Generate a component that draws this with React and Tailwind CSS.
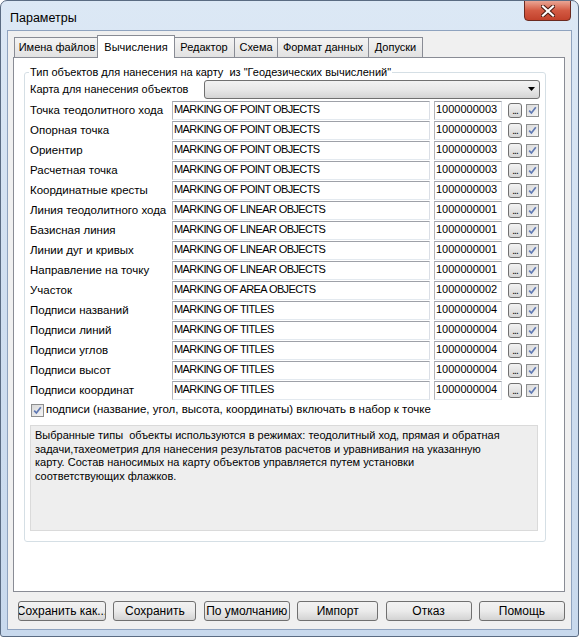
import React from 'react';

const rows = [
  ['Точка теодолитного хода', 'MARKING OF POINT OBJECTS', '1000000003'],
  ['Опорная точка', 'MARKING OF POINT OBJECTS', '1000000003'],
  ['Ориентир', 'MARKING OF POINT OBJECTS', '1000000003'],
  ['Расчетная точка', 'MARKING OF POINT OBJECTS', '1000000003'],
  ['Координатные кресты', 'MARKING OF POINT OBJECTS', '1000000003'],
  ['Линия теодолитного хода', 'MARKING OF LINEAR OBJECTS', '1000000001'],
  ['Базисная линия', 'MARKING OF LINEAR OBJECTS', '1000000001'],
  ['Линии дуг и кривых', 'MARKING OF LINEAR OBJECTS', '1000000001'],
  ['Направление на точку', 'MARKING OF LINEAR OBJECTS', '1000000001'],
  ['Участок', 'MARKING OF AREA OBJECTS', '1000000002'],
  ['Подписи названий', 'MARKING OF TITLES', '1000000004'],
  ['Подписи линий', 'MARKING OF TITLES', '1000000004'],
  ['Подписи углов', 'MARKING OF TITLES', '1000000004'],
  ['Подписи высот', 'MARKING OF TITLES', '1000000004'],
  ['Подписи координат', 'MARKING OF TITLES', '1000000004'],
];

const buttons = [
  ['Сохранить как...', 'w-[88px]'],
  ['Сохранить', 'w-[83px]'],
  ['По умолчанию', 'w-[86px]'],
  ['Импорт', 'w-[81px]'],
  ['Отказ', 'w-[86px]'],
  ['Помощь', 'w-[86px]'],
];

function CheckBox() {
  return (
    <span className="w-[13px] h-[13px] shrink-0 border border-[#8e8f8f] bg-gradient-to-br from-[#d9d9d9] to-[#f5f5f5] flex items-center justify-center">
      <svg width="9" height="9" viewBox="0 0 9 9">
        <path d="M1.2 4.6 L3.4 7 L7.8 1.2" stroke="#5f78b3" strokeWidth="1.7" fill="none" />
      </svg>
    </span>
  );
}

function Field({ value, className }) {
  return (
    <div
      className={`h-[19px] bg-white border border-t-[#9ea1a8] border-l-[#b3b5ba] border-r-[#dbdfe6] border-b-[#e3e9ef] pl-[1px] leading-[15px] text-[11px] whitespace-nowrap overflow-hidden ${className}`}
    >
      {value}
    </div>
  );
}

function Tab({ children, className }) {
  return (
    <div
      className={`h-[20px] border border-b-0 border-[#898c95] bg-gradient-to-b from-[#f4f4f4] to-[#e2e2e2] flex items-center justify-center whitespace-nowrap text-[11px] ${className}`}
    >
      {children}
    </div>
  );
}

export default function App() {
  return (
    <div
      className="w-[579px] h-[637px] rounded-t-[7px] rounded-b-[3px] border border-[#5a6b82] bg-gradient-to-b from-[#dce8f5] via-[#cfdef0] to-[#c8d9ed] flex flex-col text-[11.5px] text-black overflow-hidden"
      style={{ fontFamily: '"Liberation Sans", Arial, sans-serif' }}
    >
      {/* title bar */}
      <div className="h-[29px] shrink-0 flex items-start relative">
        <span className="pl-[9px] pt-[9px] text-[12.5px] leading-[16px]">Параметры</span>
        <div className="absolute right-[7px] top-[-1px] w-[47px] h-[21px] rounded-b-[4px] border border-[#6b2a20] bg-gradient-to-b from-[#e9a594] via-[#d35a43] to-[#c2412b] flex items-center justify-center">
          <svg width="14" height="12" viewBox="0 0 14 12">
            <path d="M2 1.5 L12 10.5 M12 1.5 L2 10.5" stroke="#4a1b12" strokeWidth="4.2" strokeLinecap="square" />
            <path d="M2 1.5 L12 10.5 M12 1.5 L2 10.5" stroke="#ffffff" strokeWidth="2.2" strokeLinecap="square" />
          </svg>
        </div>
      </div>

      {/* client area */}
      <div className="mx-[6px] mb-[6px] flex-1 border border-[#8fa3bf] bg-[#f0f0f0] flex flex-col pt-[4px]">
        {/* tabs */}
        <div className="pl-[5px]">
          <div className="flex items-end h-[22px] pl-[1px] relative z-10">
            <Tab className="w-[86px]">Имена файлов</Tab>
            <div className="h-[23px] w-[78px] -ml-[3px] -mb-px bg-white border border-b-0 border-[#898c95] flex items-start justify-center pt-[3px] whitespace-nowrap text-[11px] relative z-10">
              Вычисления
            </div>
            <Tab className="w-[62px] -ml-[2px]">Редактор</Tab>
            <Tab className="w-[44px] -ml-px">Схема</Tab>
            <Tab className="w-[92px] -ml-px">Формат данных</Tab>
            <Tab className="w-[55px] -ml-px">Допуски</Tab>
          </div>
          {/* panel */}
          <div className="w-[552px] h-[535px] border border-[#898c95] bg-white pl-[10px] pt-[7px]">
            <fieldset className="w-[522px] border border-[#d5dfe5] rounded-[3px] px-[5px] pb-[10px]">
              <legend className="-ml-[1px] px-[1px] leading-[14px] whitespace-pre text-[11px]">
                {'Тип объектов для нанесения на карту  из "Геодезических вычислений"'}
              </legend>
              <div className="flex items-center h-[20px]">
                <span className="w-[174px] shrink-0 whitespace-nowrap text-[11px]">Карта для нанесения объектов</span>
                <div className="w-[336px] h-[19px] rounded-[3px] border border-[#707070] bg-gradient-to-b from-[#f2f2f2] via-[#e8e8e8] to-[#d4d4d4] flex items-center justify-end pr-[4px]">
                  <svg width="7" height="4" viewBox="0 0 7 4">
                    <path d="M0 0 L7 0 L3.5 4 Z" fill="#000" />
                  </svg>
                </div>
              </div>
              <div className="mt-[1px]">
                {rows.map(([label, name, code], i) => (
                  <div key={i} className="flex items-center h-[20px]">
                    <span className="w-[142px] shrink-0 whitespace-nowrap pt-[2px]">{label}</span>
                    <Field value={name} className="w-[258px] tracking-[-0.6px]" />
                    <Field value={code} className="w-[68px] ml-[4px]" />
                    <div className="w-[14px] h-[15px] ml-[6px] rounded-[3px] border border-[#707070] bg-gradient-to-b from-[#f2f2f2] to-[#d6d6d6] text-[10px] leading-[14px] text-center tracking-[-1px]">
                      ...
                    </div>
                    <span className="ml-[4px]">
                      <CheckBox />
                    </span>
                  </div>
                ))}
              </div>
              <div className="flex items-center h-[20px] pl-[1px]">
                <CheckBox />
                <span className="ml-[2px] whitespace-nowrap">подписи (название, угол, высота, координаты) включать в набор к точке</span>
              </div>
              <div className="mt-[5px] w-[508px] h-[106px] border border-[#dadada] bg-[#eeeeee] pl-[4px] pt-[3px] leading-[13.5px] text-[11px]">
                Выбранные типы&nbsp; объекты используются в режимах: теодолитный ход, прямая и обратная
                <br />
                задачи,тахеометрия для нанесения результатов расчетов и уравнивания на указанную
                <br />
                карту. Состав наносимых на карту объектов управляется путем установки
                <br />
                соответствующих флажков.
              </div>
            </fieldset>
          </div>
        </div>

        {/* buttons */}
        <div className="flex justify-between pl-[10px] pr-[6px] mt-[9px]">
          {buttons.map(([label, w]) => (
            <div
              key={label}
              className={`${w} h-[20px] rounded-[3px] border border-[#707070] bg-gradient-to-b from-[#f2f2f2] via-[#ebebeb] to-[#d3d3d3] flex items-center justify-center overflow-hidden whitespace-nowrap text-[12px]`}
            >
              <span className="shrink-0">{label}</span>
            </div>
          ))}
        </div>
      </div>
    </div>
  );
}
